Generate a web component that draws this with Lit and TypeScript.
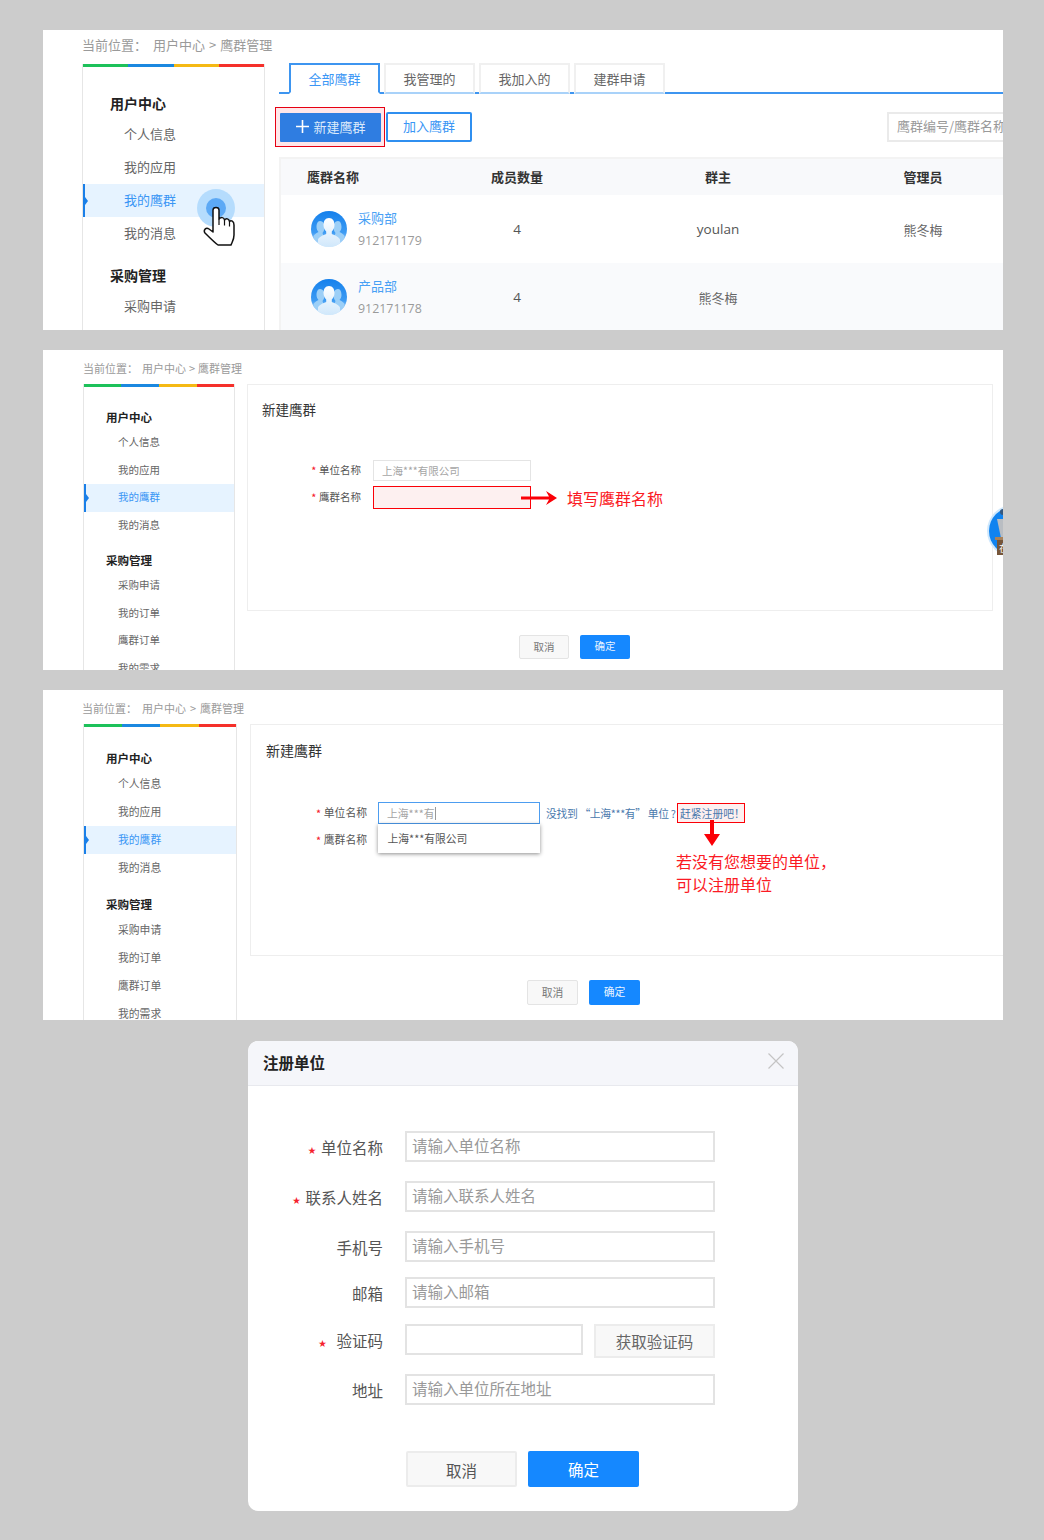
import { LitElement, html, css, svg } from "lit";
import { customElement } from "lit/decorators.js";

const avatar = (id: string) => svg`<svg class="avatar" viewBox="0 0 36 36" width="36" height="36">
  <defs>
    <linearGradient id="bg${id}" x1="0" y1="0" x2="0" y2="1"><stop offset="0" stop-color="#1480ec"/><stop offset="0.6" stop-color="#3d9bf3"/><stop offset="1" stop-color="#d9edfd"/></linearGradient>
    <linearGradient id="fg${id}" x1="0" y1="0" x2="0" y2="1"><stop offset="0" stop-color="#ffffff"/><stop offset="1" stop-color="#cfe7fb"/></linearGradient>
    <clipPath id="c${id}"><circle cx="18" cy="18" r="18"/></clipPath>
  </defs>
  <circle cx="18" cy="18" r="18" fill="url(#bg${id})"/>
  <g clip-path="url(#c${id})">
    <path d="M9 10c3 0 4.500 3 4.500 6s-1 5-2 6l1 3-5 6-5-3v-3c1-2 3-3 5-4-1-1-2-3-2-5 0-3 1-6 3.500-6z" fill="#9ccff7"/>
    <path d="M27 10c-3 0-4.500 3-4.500 6s1 5 2 6l-1 3 5 6 5-3v-3c-1-2-3-3-5-4 1-1 2-3 2-5 0-3-1-6-3.500-6z" fill="#9ccff7"/>
    <path d="M18 7c3.800 0 5.500 3.200 5.500 6.800 0 3-1.200 5.400-2.700 6.800v2.400c3 1.200 7.200 2.800 8.200 5.500v8H7v-8c1-2.700 5.200-4.300 8.200-5.500v-2.400c-1.500-1.400-2.700-3.800-2.700-6.800C12.500 10.200 14.200 7 18 7z" fill="url(#fg${id})"/>
  </g>
</svg>`;

const handIcon = svg`<svg class="hand" width="32" height="40" viewBox="-1 -1 32 40">
  <path d="M9 3C9-.5 15-.5 15 3v9c2-2 5-2 5.500 1 1.500-2 4.500-1.500 5 1.500 1.500-1.500 4.500-.5 4.500 3.500v10c0 5-2 7-3 10H14c-3-2-7-6-13-12-2-3 1-6 4-4l4 3z" fill="#fff" stroke="#111" stroke-width="1.500" stroke-linejoin="round"/>
  <path d="M15 12v6M20.500 13v5.500M25.500 14.500V19.500" fill="none" stroke="#111" stroke-width="1.200"/>
</svg>`;

const rightArrow = svg`<svg class="arrow-r" width="36" height="14" viewBox="0 0 36 14"><path d="M0 5.500h28L25 0l11 7-11 7 3-5.500H0z" fill="#fb0007"/></svg>`;
const downArrow = svg`<svg class="arrow-d" width="16" height="26" viewBox="0 0 16 26"><path d="M6 0h4v14h6L8 26 0 14h6z" fill="#fb0007"/></svg>`;

const widget = svg`<svg class="widget" width="56" height="56" viewBox="0 0 56 56">
  <circle cx="28" cy="28" r="26" fill="#cfe8fd"/>
  <circle cx="28" cy="28" r="24" fill="#1083f0"/>
  <path d="M12 16h32l-6 19H16z" fill="#b9bdc2"/>
  <circle cx="18" cy="9" r="3" fill="#35587f"/>
  <rect x="10" y="34" width="36" height="3" fill="#a9825a"/>
  <rect x="12" y="37" width="32" height="15" fill="#76563a"/>
  <text x="14" y="49" font-size="10" fill="#fff" font-family="'Noto Sans CJK SC',sans-serif">在线</text>
</svg>`;

const closeIcon = svg`<svg width="16" height="16" viewBox="0 0 16 16"><path d="M.500.500l15 15M15.500.500l-15 15" stroke="#c4c4c4" stroke-width="1.200" fill="none"/></svg>`;

const plusIcon = svg`<svg width="13" height="13" viewBox="0 0 13 13"><path d="M6.500 0v13M0 6.500h13" stroke="#fff" stroke-width="1.600"/></svg>`;

@customElement("app-root")
export class AppRoot extends LitElement {
  static styles = css`
    :host {
      display: block;
      width: 1044px;
      height: 1540px;
      background: #cccccc;
      font-family: "Noto Sans CJK SC", "Noto Sans", sans-serif;
      color: #555;
      overflow: hidden;
    }
    .page { display: flex; flex-direction: column; align-items: flex-start; padding: 30px 0 0 43px; }
    .panel {
      position: relative;
      box-sizing: border-box;
      width: 960px;
      background: #fff;
      overflow: hidden;
      display: flex;
      flex-direction: column;
      flex: none;
    }
    .p1 { height: 300px; padding-left: 39px; }
    .p2 { height: 320px; padding-left: 40px; margin-top: 20px; }
    .p3 { height: 330px; padding-left: 39px; margin-top: 20px; }

    .crumb { display: flex; height: 34px; align-items: center; color: #9a9a9a; gap: 4px; flex: none; white-space: nowrap; box-sizing: border-box; }
    .p1 .crumb { font-size: 13px; padding-bottom: 6px; }
    .p2 .crumb { font-size: 11px; padding-top: 2px; gap: 3px; }
    .p3 .crumb { font-size: 11px; padding-top: 2px; }
    .crumb .first { margin-right: 2px; }
    .p2 .crumb .first { margin-right: 1px; }
    .p3 .crumb .first { margin-right: 1px; }

    .main-row { display: flex; flex: 1; min-height: 0; }
    .p3 .main-row { padding-left: 1px; }

    /* side nav */
    .side {
      flex: none;
      box-sizing: border-box;
      border-left: 1px solid #e6e6e6;
      border-right: 1px solid #e6e6e6;
      overflow: hidden;
    }
    .p1 .side { width: 183px; }
    .p2 .side { width: 152px; }
    .p3 .side { width: 154px; }
    .bars { display: flex; height: 3px; margin: 0 -1px; }
    .bars i { flex: 1; }
    .bars i:nth-child(1) { background: #1dc15a; }
    .bars i:nth-child(2) { background: #1b88e0; }
    .bars i:nth-child(3) { background: #f5b914; }
    .bars i:nth-child(4) { background: #f5302a; }
    .side h4 { margin: 0; color: #222; font-weight: 700; white-space: nowrap; }
    .side .it { position: relative; white-space: nowrap; color: #666; }
    .side .it.on { color: #3a96f5; background: #e6f3ff; }
    .side .it.on::before { content: ""; position: absolute; left: -1px; top: 0; bottom: 0; width: 3px; background: #1a7fe8; }
    .side .it.on::after {
      content: ""; position: absolute; left: 2px; top: 50%; margin-top: -4px;
      border-left: 3px solid #1a7fe8; border-top: 4px solid transparent; border-bottom: 4px solid transparent;
    }
    .p1 .nav { padding-top: 23px; }
    .p1 .side h4 { font-size: 14px; height: 28px; line-height: 26px; padding-left: 27px; }
    .p1 .side .it { font-size: 13px; height: 33px; line-height: 31px; padding-left: 41px; }
    .p1 .side h4.second { margin-top: 12px; }
    .p2 .nav { padding-top: 18px; }
    .p2 .side h4 { font-size: 11.500px; height: 24px; line-height: 24px; padding-left: 22px; }
    .p2 .side .it { font-size: 10.500px; height: 27.500px; line-height: 25.500px; padding-left: 34px; }
    .p2 .side h4.second { margin-top: 9px; }
    .p3 .nav { padding-top: 19px; }
    .p3 .side h4 { font-size: 11.500px; height: 24px; line-height: 24px; padding-left: 22px; }
    .p3 .side .it { font-size: 10.800px; height: 28px; line-height: 26px; padding-left: 34px; }
    .p3 .side h4.second { margin-top: 10px; }

    /* panel 1 main */
    .list { flex: 1; min-width: 0; margin-left: 14px; margin-top: -1px; }
    .tabs { display: flex; gap: 4px; padding-left: 10px; height: 31px; border-bottom: 2px solid #3d95f0; box-sizing: border-box; }
    .tab {
      width: 91px; height: 31px; box-sizing: border-box; flex: none;
      border: 2px solid #f0f0f0; border-bottom: 2px solid #a9d2f9;
      text-align: center; line-height: 27px; font-size: 13px; color: #666; background: #fff;
    }
    .tab.on { color: #3a96f5; border-color: #3d95f0; border-bottom-color: #fff; }
    .tools { display: flex; align-items: center; margin-top: 13px; height: 40px; }
    .mark-btn {
      margin-left: -4px; box-sizing: border-box; width: 110px; height: 40px;
      border: 1px solid #e60012; background: #ffe6e9;
      display: flex; align-items: center; justify-content: center;
    }
    .new-btn {
      box-sizing: border-box; width: 101px; height: 29px; padding: 0 0 1px 2px; background: #2f7de1; color: #dceafb; font-size: 13px;
      display: flex; align-items: center; justify-content: center; gap: 4px; border-radius: 1px;
    }
    .new-btn span { margin-bottom: 1px; }
    .join-btn {
      margin-left: 1px; width: 86px; height: 30px; box-sizing: border-box; border: 2px solid #2f8ff0; border-radius: 2px;
      color: #3a96f5; font-size: 13px; text-align: center; line-height: 24px;
    }
    .search {
      margin-left: auto; width: 116px; height: 30px; box-sizing: border-box;
      border: 2px solid #eaeaea; border-right: 0; padding-left: 8px;
      color: #9a9a9a; font-size: 13px; line-height: 24px; white-space: nowrap; overflow: hidden;
    }
    .table { margin-top: 10px; border-top: 2px solid #f3f3f3; border-left: 2px solid #f3f3f3; }
    .tr { display: grid; grid-template-columns: 136px 200px 202px 208px; align-items: center; }
    .tr > div { text-align: center; white-space: nowrap; }
    .tr > div:first-child { text-align: left; }
    .thead { height: 36px; box-sizing: border-box; padding-bottom: 2px; background: #f8f9fb; font-size: 13px; font-weight: 700; color: #333; }
    .thead > div:first-child { padding-left: 26px; }
    .row { height: 68px; font-size: 13px; color: #666; }
    .row.alt { background: #f9fafc; }
    .row .num, .row .en { font-family: "Open Sans", "Noto Sans", sans-serif; font-size: 13.500px; color: #555; }
    .cell-name { display: flex; align-items: center; gap: 11px; padding-left: 30px; }
    .avatar { flex: none; }
    .gname { color: #47a0f5; font-size: 13px; line-height: 24px; }
    .gid { color: #9a9a9a; font-family: "Open Sans", "Noto Sans", sans-serif; font-size: 12.400px; line-height: 22px; }

    .ripple { position: absolute; left: 154px; top: 159px; width: 38px; height: 38px; border-radius: 50%; background: #b5dcfd; display: flex; align-items: center; justify-content: center; }
    .ripple i { display: block; width: 20px; height: 20px; border-radius: 50%; background: #5ca9f5; }
    .hand { position: absolute; left: 160px; top: 176px; }

    /* form panels */
    .form-col { flex: 1; min-width: 0; display: flex; flex-direction: column; }
    .p2 .form-col { margin-left: 12px; margin-right: 10px; }
    .p3 .form-col { margin-left: 13px; margin-right: -20px; }
    .card { position: relative; box-sizing: border-box; border: 1px solid #eeeeee; flex: none; }
    .p2 .card { height: 227px; }
    .p3 .card { height: 232px; }
    .card h3 { margin: 0; font-weight: 400; color: #333; }
    .p2 .card h3 { font-size: 13.500px; line-height: 26px; padding: 11px 0 0 14px; }
    .p3 .card h3 { font-size: 14px; line-height: 26px; padding: 12px 0 0 15px; }
    .frow { display: flex; align-items: center; white-space: nowrap; }
    .p2 .frow { height: 23px; }
    .p2 .frow.first { margin-top: 38px; height: 21px; }
    .p2 .frow.next { margin-top: 5px; }
    .p3 .frow.first { margin-top: 39px; height: 22px; }
    .p3 .frow.next { margin-top: 4px; height: 22px; }
    .flabel { text-align: right; color: #555; flex: none; }
    .p2 .flabel { width: 113px; margin-right: 12px; font-size: 10.500px; padding-bottom: 2px; }
    .p3 .flabel { width: 116px; margin-right: 11px; font-size: 10.800px; }
    .p3 .frow.first .flabel { padding-bottom: 3px; }
    .star { color: #f5222d; margin-right: 3px; font-size: 9px; font-weight: 700; }
    .field { box-sizing: border-box; flex: none; position: relative; }
    .p2 .field { width: 158px; font-size: 10.500px; color: #a5a5a5; padding-left: 8px; }
    .p2 .field.plain { height: 21px; line-height: 19px; border: 1.500px solid #e4e4e4; }
    .p2 .field.bad { height: 23px; border: 1px solid #fb0007; background: #fdf0f0; }
    .arrow-r { position: absolute; left: 147px; top: 3.500px; display: block; }
    .note { color: #fb1a24; font-size: 16px; }
    .p2 .note { margin-left: 36px; }
    .p3 .field { width: 162px; height: 22px; line-height: 20px; border: 1.500px solid #4d9df0; font-size: 10.800px; color: #a5a5a5; padding-left: 8px; }
    .caret { display: inline-block; width: 1px; height: 13px; background: #999; vertical-align: -2px; }
    .drop {
      position: absolute; left: -1.500px; top: 20.500px; width: 162px; height: 29px; box-sizing: border-box;
      background: #fff; box-shadow: 0 1px 4px rgba(0,0,0,.45); color: #555; padding-left: 10px; line-height: 28px; z-index: 2;
    }
    .hint { color: #4a79ad; font-size: 10.800px; margin-left: 6px; width: 132px; flex: none; letter-spacing: -0.35px; overflow: hidden; }
    .hint-box {
      box-sizing: border-box; width: 68px; height: 20px; line-height: 18px; margin-left: -1px; flex: none;
      border: 1px solid #fb0007; background: #fdf0f0; color: #4a79ad; font-size: 10.800px; padding-left: 2px;
    }
    .arrow-d { position: absolute; left: 453px; top: 95px; display: block; }
    .note-3 { position: absolute; left: 425px; top: 125px; line-height: 23px; }
    .foot { display: flex; gap: 11px; margin-top: 24px; flex: none; }
    .p2 .foot { padding-left: 272px; }
    .p3 .foot { padding-left: 277px; }
    .btn { box-sizing: border-box; text-align: center; border-radius: 2px; flex: none; }
    .btn.gray { background: #f8f8f8; border: 1px solid #e4e4e4; color: #777; }
    .btn.blue { background: #1588ff; color: #e8f3ff; }
    .p2 .btn { width: 50px; height: 24px; line-height: 22px; font-size: 10.500px; }
    .p3 .btn { width: 51px; height: 25px; line-height: 23px; font-size: 10.800px; }
    .widget { position: absolute; left: 942px; top: 153px; }

    /* modal */
    .modal { margin: 21px 0 0 205px; width: 550px; height: 470px; background: #fff; border-radius: 10px; overflow: hidden; flex: none; }
    .m-head {
      height: 44px; background: #f5f6fa; border-bottom: 1px solid #e8e9ee;
      display: flex; align-items: center; justify-content: space-between; padding: 0 14px 0 15px;
    }
    .m-head b { font-size: 15.500px; color: #222; margin-top: -3px; }
    .m-head svg { display: block; margin-top: -4px; }
    .m-body { padding-top: 45px; }
    .mrow { display: flex; align-items: flex-start; }
    .mrow.g19 { margin-top: 19px; }
    .mrow.g15 { margin-top: 15px; }
    .mrow.g16 { margin-top: 16px; }
    .mlabel { width: 135px; height: 31px; margin-right: 22px; text-align: right; font-size: 15.500px; color: #555; line-height: 32px; flex: none; white-space: nowrap; }
    .mlabel .mstar { color: #f5222d; font-size: 8px; vertical-align: 1px; }
    .mlabel .s10 { margin-right: 5px; }
    .mlabel .s18 { margin-right: 10px; }
    .minput {
      box-sizing: border-box; width: 310px; height: 31px; border: 2px solid #e3e3e3; background: #fff;
      padding-left: 5px; font-size: 15.500px; line-height: 25px; color: #999; flex: none;
    }
    .minput.short { width: 178px; }
    .mcode {
      box-sizing: border-box; width: 121px; height: 34px; margin-left: 11px; border: 2px solid #ececec; background: #f8f8f8;
      text-align: center; font-size: 15.500px; line-height: 31px; color: #666; flex: none;
    }
    .m-foot { display: flex; gap: 11px; margin: 46px 0 0 158px; }
    .mbtn { box-sizing: border-box; width: 111px; height: 36px; line-height: 36px; font-size: 15.500px; text-align: center; border-radius: 2px; flex: none; }
    .mbtn.gray { border: 2px solid #ececec; background: #f8f8f8; color: #555; line-height: 34px; }
    .mbtn.blue { background: #1588ff; color: #fff; }
  `;

  private crumb() {
    return html`<div class="crumb"><span class="first">当前位置：</span><span>用户中心</span><span>&gt;</span><span>鹰群管理</span></div>`;
  }

  private side(long: boolean) {
    const a = ["个人信息", "我的应用", "我的鹰群", "我的消息"];
    const b = long ? ["采购申请", "我的订单", "鹰群订单", "我的需求"] : ["采购申请"];
    return html`<aside class="side">
      <div class="bars"><i></i><i></i><i></i><i></i></div>
      <div class="nav">
        <h4>用户中心</h4>
        ${a.map((t, i) => html`<div class="it ${i === 2 ? "on" : ""}">${t}</div>`)}
        <h4 class="second">采购管理</h4>
        ${b.map((t) => html`<div class="it">${t}</div>`)}
      </div>
    </aside>`;
  }

  private panelOne() {
    return html`<section class="panel p1">
      ${this.crumb()}
      <div class="main-row">
        ${this.side(false)}
        <div class="list">
          <div class="tabs">
            <div class="tab on">全部鹰群</div><div class="tab">我管理的</div><div class="tab">我加入的</div><div class="tab">建群申请</div>
          </div>
          <div class="tools">
            <div class="mark-btn"><div class="new-btn">${plusIcon}<span>新建鹰群</span></div></div>
            <div class="join-btn">加入鹰群</div>
            <div class="search">鹰群编号/鹰群名称</div>
          </div>
          <div class="table">
            <div class="tr thead"><div>鹰群名称</div><div>成员数量</div><div>群主</div><div>管理员</div></div>
            <div class="tr row">
              <div class="cell-name">${avatar("a")}<div><div class="gname">采购部</div><div class="gid">912171179</div></div></div>
              <div class="num">4</div><div class="en">youlan</div><div>熊冬梅</div>
            </div>
            <div class="tr row alt">
              <div class="cell-name">${avatar("b")}<div><div class="gname">产品部</div><div class="gid">912171178</div></div></div>
              <div class="num">4</div><div>熊冬梅</div><div></div>
            </div>
          </div>
        </div>
      </div>
      <div class="ripple"><i></i></div>
      ${handIcon}
    </section>`;
  }

  private panelTwo() {
    return html`<section class="panel p2">
      ${this.crumb()}
      <div class="main-row">
        ${this.side(true)}
        <div class="form-col">
          <div class="card">
            <h3>新建鹰群</h3>
            <div class="frow first"><div class="flabel"><span class="star">*</span>单位名称</div><div class="field plain">上海***有限公司</div></div>
            <div class="frow next"><div class="flabel"><span class="star">*</span>鹰群名称</div><div class="field bad">${rightArrow}</div><div class="note">填写鹰群名称</div></div>
          </div>
          <div class="foot"><div class="btn gray">取消</div><div class="btn blue">确定</div></div>
        </div>
      </div>
      ${widget}
    </section>`;
  }

  private panelThree() {
    return html`<section class="panel p3">
      ${this.crumb()}
      <div class="main-row">
        ${this.side(true)}
        <div class="form-col">
          <div class="card">
            <h3>新建鹰群</h3>
            <div class="frow first">
              <div class="flabel"><span class="star">*</span>单位名称</div>
              <div class="field">上海***有<span class="caret"></span><div class="drop">上海***有限公司</div></div>
              <div class="hint">没找到 “上海***有” 单位 ?</div>
              <div class="hint-box">赶紧注册吧！</div>
            </div>
            <div class="frow next"><div class="flabel"><span class="star">*</span>鹰群名称</div></div>
            ${downArrow}
            <div class="note note-3">若没有您想要的单位，<br />可以注册单位</div>
          </div>
          <div class="foot"><div class="btn gray">取消</div><div class="btn blue">确定</div></div>
        </div>
      </div>
    </section>`;
  }

  private modal() {
    const star = (cls: string) => html`<span class="mstar ${cls}">★</span>`;
    return html`<section class="modal">
      <div class="m-head"><b>注册单位</b>${closeIcon}</div>
      <div class="m-body">
        <div class="mrow"><div class="mlabel">${star("s10")}单位名称</div><div class="minput">请输入单位名称</div></div>
        <div class="mrow g19"><div class="mlabel">${star("s10")}联系人姓名</div><div class="minput">请输入联系人姓名</div></div>
        <div class="mrow g19"><div class="mlabel">手机号</div><div class="minput">请输入手机号</div></div>
        <div class="mrow g15"><div class="mlabel">邮箱</div><div class="minput">请输入邮箱</div></div>
        <div class="mrow g16"><div class="mlabel">${star("s18")}验证码</div><div class="minput short"></div><div class="mcode">获取验证码</div></div>
        <div class="mrow g16"><div class="mlabel">地址</div><div class="minput">请输入单位所在地址</div></div>
        <div class="m-foot"><div class="mbtn gray">取消</div><div class="mbtn blue">确定</div></div>
      </div>
    </section>`;
  }

  render() {
    return html`<div class="page">${this.panelOne()}${this.panelTwo()}${this.panelThree()}${this.modal()}</div>`;
  }
}
